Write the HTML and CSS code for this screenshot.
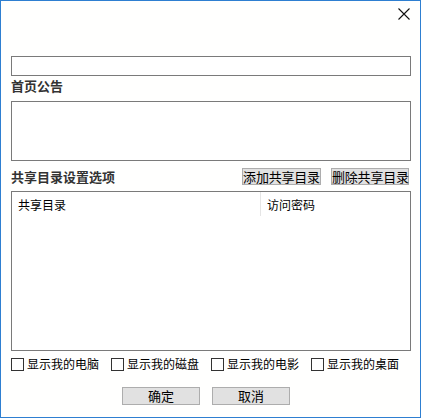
FILE: index.html
```html
<!DOCTYPE html>
<html lang="zh-CN">
<head>
<meta charset="utf-8">
<link rel="stylesheet" href="styles.css">
</head>
<body>
<div class="window">
  <div class="titlebar">
    <svg class="close" width="12" height="12" viewBox="0 0 12 12"><path d="M0.5 0.5L11.5 11.5M11.5 0.5L0.5 11.5" stroke="#111" stroke-width="1.1" fill="none"/></svg>
  </div>
  <div class="input"></div>
  <div class="label">首页公告</div>
  <div class="textarea"></div>
  <div class="share-row">
    <div class="label-inline">共享目录设置选项</div>
    <div class="btn btn-add">添加共享目录</div>
    <div class="btn btn-del">删除共享目录</div>
  </div>
  <div class="list">
    <div class="list-head">
      <div class="col col1">共享目录</div>
      <div class="col col2">访问密码</div>
    </div>
  </div>
  <div class="checks">
    <label class="check"><span class="box"></span>显示我的电脑</label>
    <label class="check"><span class="box"></span>显示我的磁盘</label>
    <label class="check"><span class="box"></span>显示我的电影</label>
    <label class="check"><span class="box"></span>显示我的桌面</label>
  </div>
  <div class="actions">
    <div class="btn btn-action">确定</div>
    <div class="btn btn-action">取消</div>
  </div>
</div>
</body>
</html>
```

FILE: styles.css
```css
html, body {
  margin: 0;
  padding: 0;
  background: #ffffff;
}
body {
  font-family: "Noto Sans CJK SC", "Noto Sans", sans-serif;
  font-size: 12px;
  color: #000;
}
.window {
  width: 421px;
  height: 418px;
  box-sizing: border-box;
  border: 1px solid #2e7fd1;
  background: #fffffe;
  padding: 0 9px 0 10px;
  display: flex;
  flex-direction: column;
}
.titlebar {
  height: 55px;
  display: flex;
  justify-content: flex-end;
  align-items: flex-start;
  padding-top: 7px;
  box-sizing: border-box;
}
.close {
  display: block;
  margin-right: 1px;
}
.input {
  height: 20px;
  box-sizing: border-box;
  border: 1px solid #7a7a7a;
  background: #fff;
}
.label {
  height: 25px;
  box-sizing: border-box;
  padding-top: 2px;
  line-height: 16px;
  font-size: 13px;
  font-weight: bold;
  color: #333;
}
.textarea {
  height: 60px;
  box-sizing: border-box;
  border: 1px solid #7a7a7a;
  background: #fff;
}
.share-row {
  margin-top: 7px;
  height: 17px;
  display: flex;
  align-items: center;
}
.label-inline {
  flex: 1;
  font-size: 13px;
  font-weight: bold;
  color: #333;
  line-height: 17px;
}
.btn {
  box-sizing: border-box;
  background: #e1e1e1;
  border: 1px solid #adadad;
  font-size: 13px;
  line-height: 15px;
  text-align: center;
  color: #000;
  white-space: nowrap;
  letter-spacing: -0.2px;
}
.btn-add {
  width: 79px;
  height: 17px;
}
.btn-del {
  width: 78px;
  height: 17px;
  margin-left: 10px;
  margin-right: 2px;
}
.list {
  margin-top: 6px;
  height: 160px;
  box-sizing: border-box;
  border: 1px solid #7a7a7a;
  background: #fff;
}
.list-head {
  display: flex;
  height: 24px;
}
.col {
  line-height: 16px;
  padding-top: 5px;
  box-sizing: border-box;
  font-size: 12px;
}
.col1 {
  width: 249px;
  padding-left: 6px;
  border-right: 1px solid #e5e5e5;
}
.col2 {
  padding-left: 6px;
}
.checks {
  margin-top: 6px;
  height: 14px;
  display: flex;
}
.check {
  width: 100px;
  display: flex;
  align-items: center;
  font-size: 12px;
  line-height: 14px;
}
.box {
  width: 13px;
  height: 13px;
  box-sizing: border-box;
  border: 1px solid #333;
  background: #fff;
  margin-right: 3px;
  flex: none;
}
.actions {
  margin-top: 16px;
  display: flex;
  gap: 12px;
  padding-left: 111px;
}
.btn-action {
  width: 78px;
  height: 18px;
  line-height: 16px;
  letter-spacing: 0;
}
```
